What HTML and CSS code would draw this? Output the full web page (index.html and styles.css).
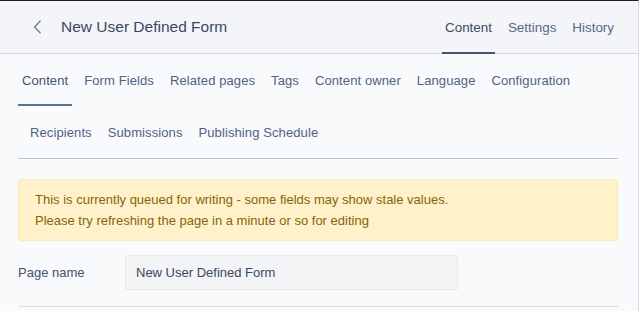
FILE: index.html
```html
<!DOCTYPE html>
<html lang="en">
<head>
  <meta charset="UTF-8">
  <meta name="viewport" content="width=device-width, initial-scale=1.0">
  <title>New User Defined Form</title>
  <link rel="stylesheet" href="styles.css">
</head>
<body>
  <div class="app">
    <header class="header">
      <a class="header__back" href="#">
        <svg width="9" height="14" viewBox="0 0 9 14"><path d="M7.5 0.8 L1.5 7 L7.5 13.2" fill="none" stroke="#6c7b96" stroke-width="1.3"/></svg>
      </a>
      <h1 class="header__title">New User Defined Form</h1>
      <nav class="header__tabs">
        <a class="header__tab active" href="#">Content</a>
        <a class="header__tab" href="#">Settings</a>
        <a class="header__tab" href="#">History</a>
      </nav>
    </header>

    <div class="content">
      <nav class="tabs">
        <a class="tabs__item active" href="#">Content</a>
        <a class="tabs__item" href="#">Form Fields</a>
        <a class="tabs__item" href="#">Related pages</a>
        <a class="tabs__item" href="#">Tags</a>
        <a class="tabs__item" href="#">Content owner</a>
        <a class="tabs__item" href="#">Language</a>
        <a class="tabs__item" href="#">Configuration</a>
        <a class="tabs__item" href="#">Recipients</a>
        <a class="tabs__item" href="#">Submissions</a>
        <a class="tabs__item" href="#">Publishing Schedule</a>
      </nav>

      <div class="alert">
        <p>This is currently queued for writing - some fields may show stale values.</p>
        <p>Please try refreshing the page in a minute or so for editing</p>
      </div>

      <div class="field">
        <label class="field__label" for="page-name">Page name</label>
        <input class="field__input" id="page-name" type="text" value="New User Defined Form" readonly>
      </div>
    </div>
  </div>
</body>
</html>
```

FILE: styles.css
```css
* {
  margin: 0;
  padding: 0;
  box-sizing: border-box;
}

body {
  margin: 0;
  background-color: #fff;
  font-family: "Liberation Sans", Arial, sans-serif;
  font-size: 13px;
  color: #43516b;
}

a {
  text-decoration: none;
  color: inherit;
}

.app {
  width: 639px;
  height: 311px;
  background-color: #f9fafc;
  border-top: 1px solid #1b1d20;
  border-right: 1px solid #d5d9e1;
  overflow: hidden;
}

.header {
  display: flex;
  align-items: stretch;
  height: 53px;
  padding: 0 21px 0 33px;
  background-color: #f4f5f8;
  border-bottom: 1px solid #d3d8e3;
}

.header__back {
  display: flex;
  align-items: center;
  margin-right: 19px;
}

.header__title {
  display: flex;
  align-items: center;
  flex: 1;
  font-size: 15.5px;
  font-weight: normal;
  color: #3b4860;
}

.header__tabs {
  display: flex;
}

.header__tab {
  display: flex;
  align-items: center;
  padding: 1px 3px 0;
  margin-left: 10px;
  margin-bottom: -1px;
  border-bottom: 2px solid transparent;
  font-size: 13.4px;
  color: #56688a;
}

.header__tab.active {
  color: #3d4b63;
  border-bottom-color: #43526d;
}

.content {
  padding: 0 20px 0 18px;
}

.tabs {
  display: flex;
  flex-wrap: wrap;
  border-bottom: 1px solid #bac4d5;
}

.tabs__item {
  display: flex;
  align-items: center;
  height: 52px;
  padding: 2px 4px 0;
  margin-left: 8px;
  border-bottom: 2px solid transparent;
  font-size: 13px;
  letter-spacing: 0.1px;
  color: #4f6285;
}

.tabs__item:first-child {
  margin-left: 0;
}

.tabs__item.active {
  color: #435273;
  border-bottom-color: #5a6f96;
}

.alert {
  margin-top: 20px;
  padding: 10px 16px 9px;
  background-color: #fff2cb;
  border: 1px solid #fbe9b0;
  border-radius: 3px;
  color: #846508;
  line-height: 20.5px;
}

.field {
  display: flex;
  align-items: center;
  margin-top: 14px;
  padding-bottom: 16px;
  border-bottom: 1px solid #d7dce5;
}

.field__label {
  width: 107px;
  color: #43516b;
}

.field__input {
  width: 333px;
  height: 35px;
  padding: 0 10px;
  background-color: #f3f4f6;
  border: 1px solid #e6e8ec;
  border-radius: 3px;
  font-family: inherit;
  font-size: 13px;
  color: #3b4860;
  outline: none;
}
```
